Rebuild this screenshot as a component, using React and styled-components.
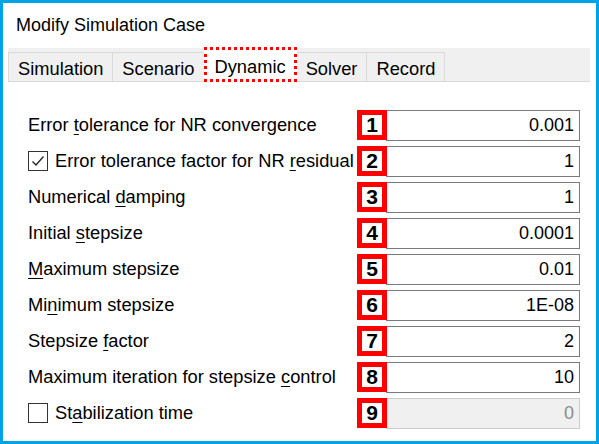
import React from 'react';
import styled, { createGlobalStyle } from 'styled-components';

const GlobalStyle = createGlobalStyle`
  html, body {
    margin: 0;
    padding: 0;
    background: #fff;
  }
  body {
    font-family: "Liberation Sans", Arial, sans-serif;
    color: #000;
  }
`;

const Window = styled.div`
  box-sizing: border-box;
  width: 599px;
  height: 444px;
  border: 3px solid #00a2e8;
  background: #fff;
  display: flex;
  flex-direction: column;
`;

const Title = styled.div`
  height: 45px;
  display: flex;
  align-items: center;
  padding-left: 13px;
  font-size: 18px;
`;

const TabStrip = styled.div`
  height: 33px;
  margin: 0 6px 0 5px;
  background: #f0f0f0;
  border-bottom: 1px solid #d9d9d9;
  display: flex;
  align-items: flex-end;
`;

const Tab = styled.div`
  box-sizing: border-box;
  height: ${p => (p.$active ? 35 : 29)}px;
  margin-bottom: ${p => (p.$active ? -1 : 0)}px;
  padding: ${p => (p.$active ? 4 : 3)}px ${p => (p.$active ? 8 : 9)}px 0;
  display: flex;
  align-items: center;
  font-size: 18.3px;
  background: ${p => (p.$active ? '#fff' : '#f0f0f0')};
  border: ${p => (p.$active ? '3px dotted #ff0000' : '1px solid #d9d9d9')};
  border-bottom: ${p => (p.$active ? '3px dotted #ff0000' : 'none')};
  margin-left: ${p => (p.$first ? 0 : -1)}px;
  position: relative;
  z-index: ${p => (p.$active ? 1 : 0)};
`;

const Form = styled.div`
  padding: 25px 16px 0 25px;
  display: flex;
  flex-direction: column;
`;

const Row = styled.div`
  height: 36px;
  display: flex;
  align-items: center;
`;

const Label = styled.div`
  flex: 1;
  display: flex;
  align-items: center;
  font-size: 18.3px;
  white-space: nowrap;

  u {
    text-underline-offset: 3px;
  }
`;

const CheckBox = styled.span`
  box-sizing: border-box;
  width: 20px;
  height: 20px;
  border: 1px solid #333;
  background: #fff;
  margin-right: 7px;
  display: inline-flex;
  align-items: center;
  justify-content: center;
`;

const Field = styled.div`
  width: 223px;
  display: flex;
  align-items: center;
`;

const Badge = styled.div`
  box-sizing: border-box;
  width: 30px;
  height: 30px;
  border: 5px solid #ff0000;
  background: #fff;
  display: flex;
  align-items: center;
  justify-content: center;
  font-size: 21px;
  font-weight: bold;
  position: relative;
  z-index: 1;
`;

const Input = styled.div`
  box-sizing: border-box;
  flex: 1;
  height: 31px;
  margin-left: -1px;
  border: 1px solid ${p => (p.$disabled ? '#cccccc' : '#7a7a7a')};
  background: ${p => (p.$disabled ? '#f0f0f0' : '#fff')};
  color: ${p => (p.$disabled ? '#8a8a8a' : '#000')};
  display: flex;
  align-items: center;
  justify-content: flex-end;
  padding-right: 5px;
  font-size: 18px;
`;

const Check = () => (
  <svg width="16" height="16" viewBox="0 0 16 16">
    <polyline points="2.5,8.5 6,12 13.5,3.5" fill="none" stroke="#222" strokeWidth="1.3" />
  </svg>
);

const tabs = ['Simulation', 'Scenario', 'Dynamic', 'Solver', 'Record'];

const rows = [
  { label: <>Error <u>t</u>olerance for NR convergence</>, value: '0.001' },
  { label: <>Error tolerance factor for NR <u>r</u>esidual</>, value: '1', check: true },
  { label: <>Numerical <u>d</u>amping</>, value: '1' },
  { label: <>Initial <u>s</u>tepsize</>, value: '0.0001' },
  { label: <><u>M</u>aximum stepsize</>, value: '0.01' },
  { label: <>Mi<u>n</u>imum stepsize</>, value: '1E-08' },
  { label: <>Stepsize <u>f</u>actor</>, value: '2' },
  { label: <>Maximum iteration for stepsize <u>c</u>ontrol</>, value: '10' },
  { label: <>St<u>a</u>bilization time</>, value: '0', check: false, disabled: true },
];

export default function App() {
  return (
    <>
      <GlobalStyle />
      <Window>
        <Title>Modify Simulation Case</Title>
        <TabStrip>
          {tabs.map((t, i) => (
            <Tab key={t} $first={i === 0} $active={t === 'Dynamic'}>
              {t}
            </Tab>
          ))}
        </TabStrip>
        <Form>
          {rows.map((r, i) => (
            <Row key={i}>
              <Label>
                {r.check !== undefined && <CheckBox>{r.check && <Check />}</CheckBox>}
                <span>{r.label}</span>
              </Label>
              <Field>
                <Badge>{i + 1}</Badge>
                <Input $disabled={r.disabled}>{r.value}</Input>
              </Field>
            </Row>
          ))}
        </Form>
      </Window>
    </>
  );
}
